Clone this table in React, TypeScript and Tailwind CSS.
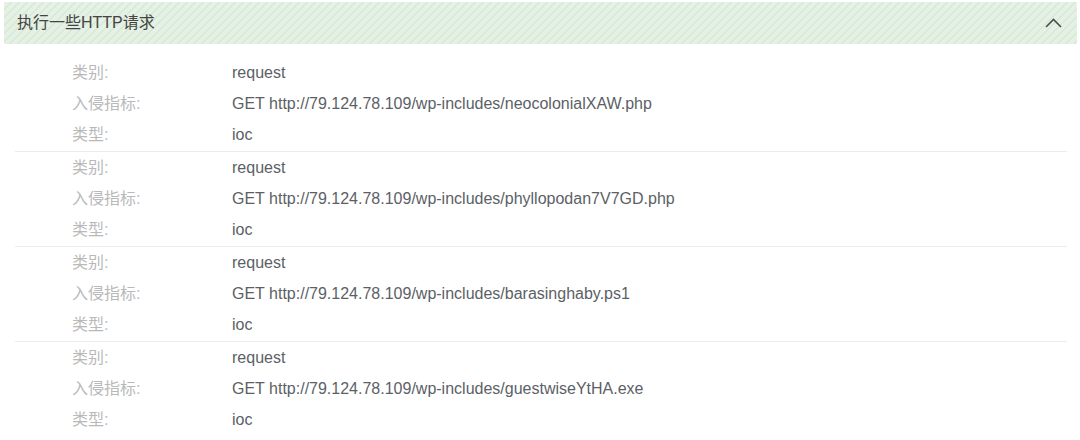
const items = [
  "GET http://79.124.78.109/wp-includes/neocolonialXAW.php",
  "GET http://79.124.78.109/wp-includes/phyllopodan7V7GD.php",
  "GET http://79.124.78.109/wp-includes/barasinghaby.ps1",
  "GET http://79.124.78.109/wp-includes/guestwiseYtHA.exe",
];

function Row({ label, value }: { label: string; value: string }) {
  return (
    <div className="flex h-[31px] items-center">
      <div className="w-[217px] shrink-0 pl-[57px] text-[#b9b9b9]">{label}:</div>
      <div className="text-[#5c5f66]">{value}</div>
    </div>
  );
}

export default function App() {
  return (
    <div
      className="h-[440px] w-[1080px] overflow-hidden bg-white pt-[2px] text-[16px]"
      style={{ fontFamily: '"Liberation Sans", "Noto Sans CJK SC", sans-serif' }}
    >
      {/* collapse header */}
      <div className="mr-[3px] ml-[4px] flex h-[42px] items-center justify-between pl-[13px] pr-[14px] bg-[repeating-linear-gradient(135deg,#e4f1e4_0px,#e4f1e4_4.4px,#d6e8d6_4.4px,#d6e8d6_5.66px)]">
        <span className="text-[#444]">执行一些HTTP请求</span>
        <svg width="18" height="12" viewBox="0 0 18 12" fill="none">
          <polyline points="1,10 8.5,2.5 16,10" stroke="#4a4d52" strokeWidth="1.6" />
        </svg>
      </div>

      {/* list */}
      <div className="mt-[13px] pl-[15px] pr-[13px]">
        {items.map((v, i) => (
          <div
            key={i}
            className={i < items.length - 1 ? "border-b border-[#ebedf2] pb-[1px]" : "pb-[1px]"}
          >
            <Row label="类别" value="request" />
            <Row label="入侵指标" value={v} />
            <Row label="类型" value="ioc" />
          </div>
        ))}
      </div>
    </div>
  );
}
